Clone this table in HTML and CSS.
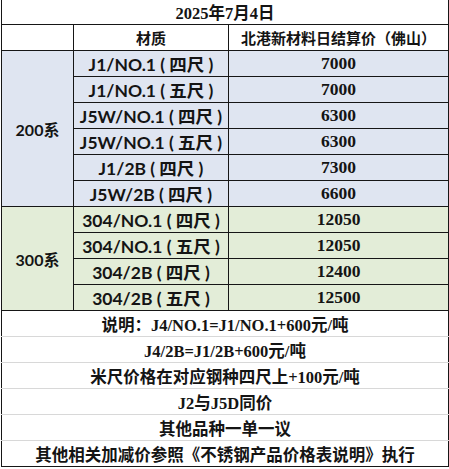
FILE: index.html
```html
<!DOCTYPE html>
<html lang="zh">
<head>
<meta charset="utf-8">
<link rel="stylesheet" href="styles.css">
</head>
<body>
<table class="sheet">
  <colgroup>
    <col class="c-series">
    <col class="c-mat">
    <col class="c-price">
  </colgroup>
  <tr class="title-row"><td colspan="3" class="title">2025年7月4日</td></tr>
  <tr class="head-row">
    <td></td>
    <td class="head">材质</td>
    <td class="head">北港新材料日结算价（佛山）</td>
  </tr>
  <tr class="s200">
    <td rowspan="6" class="series">200系</td>
    <td class="mat">J1/NO.1 ( 四尺 )</td><td class="price">7000</td>
  </tr>
  <tr class="s200"><td class="mat">J1/NO.1 ( 五尺 )</td><td class="price">7000</td></tr>
  <tr class="s200"><td class="mat">J5W/NO.1 ( 四尺 )</td><td class="price">6300</td></tr>
  <tr class="s200"><td class="mat">J5W/NO.1 ( 五尺 )</td><td class="price">6300</td></tr>
  <tr class="s200"><td class="mat">J1/2B ( 四尺 )</td><td class="price">7300</td></tr>
  <tr class="s200"><td class="mat">J5W/2B ( 四尺 )</td><td class="price">6600</td></tr>
  <tr class="s300">
    <td rowspan="4" class="series">300系</td>
    <td class="mat">304/NO.1 ( 四尺 )</td><td class="price">12050</td>
  </tr>
  <tr class="s300"><td class="mat">304/NO.1 ( 五尺 )</td><td class="price">12050</td></tr>
  <tr class="s300"><td class="mat">304/2B ( 四尺 )</td><td class="price">12400</td></tr>
  <tr class="s300"><td class="mat">304/2B ( 五尺 )</td><td class="price">12500</td></tr>
  <tr class="note-row first"><td colspan="3" class="note">说明：J4/NO.1=J1/NO.1+600元/吨</td></tr>
  <tr class="note-row"><td colspan="3" class="note">J4/2B=J1/2B+600元/吨</td></tr>
  <tr class="note-row"><td colspan="3" class="note">米尺价格在对应钢种四尺上+100元/吨</td></tr>
  <tr class="note-row"><td colspan="3" class="note">J2与J5D同价</td></tr>
  <tr class="note-row"><td colspan="3" class="note">其他品种一单一议</td></tr>
  <tr class="note-row last"><td colspan="3" class="note">其他相关加减价参照《不锈钢产品价格表说明》执行</td></tr>
</table>
</body>
</html>
```

FILE: styles.css
```css
html, body {
  margin: 0;
  padding: 0;
  background: #ffffff;
}

.sheet {
  margin: 0 0 0 1px;
  width: 447px;
  border-collapse: collapse;
  table-layout: fixed;
  color: #141414;
}

.c-series { width: 72px; }
.c-mat { width: 155px; }
.c-price { width: 220px; }

.sheet td {
  padding: 0;
  text-align: center;
  vertical-align: middle;
  border: 1px solid #161616;
  white-space: nowrap;
  overflow: hidden;
}

.title-row td {
  height: 24px;
  border-top: none;
  font-family: "Liberation Serif", "Noto Sans CJK SC", serif;
  font-weight: bold;
  font-size: 16.5px;
}

.head-row td {
  height: 25px;
  background: #ffffff;
}

.head {
  font-family: "Noto Sans CJK SC", sans-serif;
  font-weight: bold;
  font-size: 15px;
}

.s200 td, .s300 td {
  height: 25px;
}

.s200 td { background: #dfe5f1; }
.s300 td { background: #e3edd8; }

.series {
  font-family: "Lato", "Noto Sans CJK SC", sans-serif;
  font-weight: bold;
  font-size: 16px;
}

.mat {
  font-family: "Lato", "Noto Sans CJK SC", sans-serif;
  font-weight: bold;
  font-size: 17.5px;
}

.price {
  font-family: "Liberation Serif", serif;
  font-weight: bold;
  font-size: 17.5px;
}

.note-row td {
  height: 25px;
  border-top: 1px solid #d8d8d8;
  border-bottom: 1px solid #d8d8d8;
  background: #ffffff;
}

.note-row.first td { border-top: 1px solid #161616; }
.note-row.last td { border-bottom: 1px solid #161616; }

.note {
  font-family: "Liberation Serif", "Noto Sans CJK SC", serif;
  font-weight: bold;
  font-size: 16.5px;
}
```
